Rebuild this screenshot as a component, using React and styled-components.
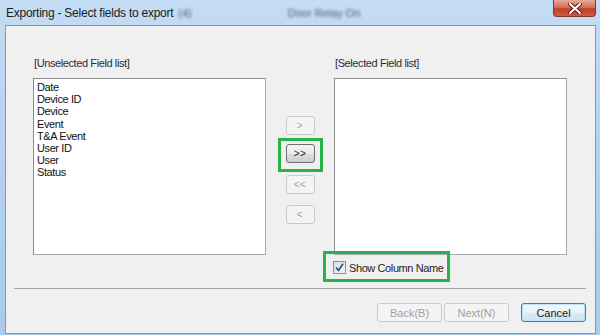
import React from 'react'
import styled, { createGlobalStyle } from 'styled-components'

const GlobalStyle = createGlobalStyle`
  body {
    margin: 0;
    background: #b9d5f0;
    font-family: 'Liberation Sans', Arial, sans-serif;
  }
`

const Window = styled.div`
  width: 600px;
  height: 335px;
  display: flex;
  flex-direction: column;
  background: linear-gradient(to bottom, #c4dcf4 0%, #b7d3f0 40%, #a9caec 100%);
  overflow: hidden;
`

const TitleBar = styled.div`
  height: 25px;
  display: flex;
  align-items: center;
  padding-left: 6px;
  flex-shrink: 0;
`

const Title = styled.span`
  font-size: 12px;
  letter-spacing: -0.25px;
  color: #1b1b1b;
  white-space: nowrap;
`

const Blurred = styled.span`
  margin-left: ${p => p.gap}px;
  font-size: 11px;
  color: #3a4654;
  filter: blur(1.4px);
  opacity: 0.85;
  white-space: nowrap;
`

const CloseButton = styled.div`
  margin-left: auto;
  margin-right: 4px;
  align-self: flex-start;
  width: 43px;
  height: 17px;
  box-sizing: border-box;
  border: 1px solid #7a3a30;
  border-top: none;
  border-radius: 0 0 4px 4px;
  background: linear-gradient(to bottom, #e8a898 0%, #d5705d 45%, #c23f2a 55%, #cf5a40 100%);
  display: flex;
  align-items: center;
  justify-content: center;
`

const Client = styled.div`
  flex: 1;
  margin: 0 4px 1px 5px;
  border: 1px solid #8a97a6;
  background: #f0f0f0;
  display: flex;
  flex-direction: column;
  letter-spacing: -0.4px;
`

const Body = styled.div`
  display: flex;
  padding: 30px 0 0 27px;
`

const Column = styled.div`
  width: 233px;
  display: flex;
  flex-direction: column;
`

const Label = styled.div`
  font-size: 11px;
  line-height: 14px;
  color: #2e2a3e;
  padding-left: 1px;
  margin-bottom: 8px;
`

const ListBox = styled.div`
  height: 177px;
  box-sizing: border-box;
  border: 1px solid #a9abb0;
  border-left-color: #8a8c90;
  border-top-color: #8a8c90;
  background: #fff;
  padding: 2px 3px;
`

const Item = styled.div`
  font-size: 11px;
  line-height: 12.2px;
  color: #111;
`

const Middle = styled.div`
  width: 68px;
  display: flex;
  flex-direction: column;
  align-items: center;
  padding-top: 60px;
`

const Highlight = styled.div`
  position: relative;
  align-self: ${p => p.align || 'center'};
  margin: ${p => p.margin};

  &::after {
    content: '';
    position: absolute;
    inset: ${p => p.inset};
    border: 3px solid #27b24a;
    pointer-events: none;
  }
`

const MoveButton = styled.div`
  width: 29px;
  height: 19px;
  box-sizing: border-box;
  border-radius: 3px;
  margin-top: ${p => p.gap || 0}px;
  display: flex;
  align-items: center;
  justify-content: center;
  font-size: 10px;
  letter-spacing: 0.5px;
  border: 1px solid ${p => (p.enabled ? '#707070' : '#c9cbcd')};
  color: ${p => (p.enabled ? '#222' : '#a2a2a2')};
  background: ${p =>
    p.enabled
      ? 'linear-gradient(to bottom, #f3f3f3 0%, #ebebeb 50%, #dddddd 51%, #cfcfcf 100%)'
      : '#f4f4f4'};
`

const CheckRow = styled.div`
  display: flex;
  align-items: center;
  height: 13px;
`

const CheckBox = styled.div`
  width: 13px;
  height: 13px;
  box-sizing: border-box;
  border: 1px solid #8e8f8f;
  background: linear-gradient(135deg, #d9dde3 0%, #f4f5f7 100%);
  display: flex;
  align-items: center;
  justify-content: center;
  margin-right: 3px;
`

const CheckLabel = styled.span`
  font-size: 11px;
  color: #1e1e1e;
  white-space: nowrap;
`

const Separator = styled.div`
  height: 1px;
  background: #a0a0a0;
  margin: 14px 9px 0 8px;
`

const Footer = styled.div`
  display: flex;
  justify-content: flex-end;
  padding: 14px 9px 0 0;
`

const DialogButton = styled.div`
  width: 65px;
  height: 19px;
  box-sizing: border-box;
  border-radius: 3px;
  margin-left: ${p => p.gap}px;
  display: flex;
  align-items: center;
  justify-content: center;
  font-size: 11px;
  letter-spacing: 0;
  border: 1px solid ${p => (p.primary ? '#3c7fb1' : p.disabled ? '#c9cbcd' : '#707070')};
  color: ${p => (p.disabled ? '#a0a0a0' : '#1e1e1e')};
  background: ${p =>
    p.disabled
      ? '#f4f4f4'
      : 'linear-gradient(to bottom, #f2f8fc 0%, #eaf3fa 50%, #dceaf5 51%, #d0e2f0 100%)'};
  box-shadow: ${p => (p.primary ? 'inset 0 0 0 1px #bde4f7' : 'none')};
`

const fields = ['Date', 'Device ID', 'Device', 'Event', 'T&A Event', 'User ID', 'User', 'Status']

const App = () => (
  <>
    <GlobalStyle />
    <Window>
      <TitleBar>
        <Title>Exporting - Select fields to export</Title>
        <Blurred gap={5}>(4)</Blurred>
        <Blurred gap={96}>Door Relay On</Blurred>
        <CloseButton>
          <svg width="14" height="11" viewBox="0 0 14 11">
            <path d="M2 1 L12 10 M12 1 L2 10" stroke="#4a1a14" strokeWidth="4" strokeLinecap="round" />
            <path d="M2 1 L12 10 M12 1 L2 10" stroke="#fff" strokeWidth="2.2" strokeLinecap="round" />
          </svg>
        </CloseButton>
      </TitleBar>
      <Client>
        <Body>
          <Column>
            <Label>[Unselected Field list]</Label>
            <ListBox>
              {fields.map(f => (
                <Item key={f}>{f}</Item>
              ))}
            </ListBox>
          </Column>
          <Middle>
            <MoveButton>&gt;</MoveButton>
            <Highlight margin="9px 0 0" inset="-6px -8px -9px -8px">
              <MoveButton enabled>&gt;&gt;</MoveButton>
            </Highlight>
            <MoveButton gap={12}>&lt;&lt;</MoveButton>
            <MoveButton gap={11}>&lt;</MoveButton>
          </Middle>
          <Column>
            <Label>[Selected Field list]</Label>
            <ListBox />
            <Highlight align="flex-start" margin="6px 0 0 -1px" inset="-10px -7px -8px -10px">
              <CheckRow>
                <CheckBox>
                  <svg width="9" height="9" viewBox="0 0 9 9">
                    <path d="M1 4.5 L3.5 7.5 L8 0.8" stroke="#2a4a8c" strokeWidth="1.6" fill="none" />
                  </svg>
                </CheckBox>
                <CheckLabel>Show Column Name</CheckLabel>
              </CheckRow>
            </Highlight>
          </Column>
        </Body>
        <Separator />
        <Footer>
          <DialogButton disabled gap={0}>Back(B)</DialogButton>
          <DialogButton disabled gap={2}>Next(N)</DialogButton>
          <DialogButton primary gap={12}>Cancel</DialogButton>
        </Footer>
      </Client>
    </Window>
  </>
)

export default App
